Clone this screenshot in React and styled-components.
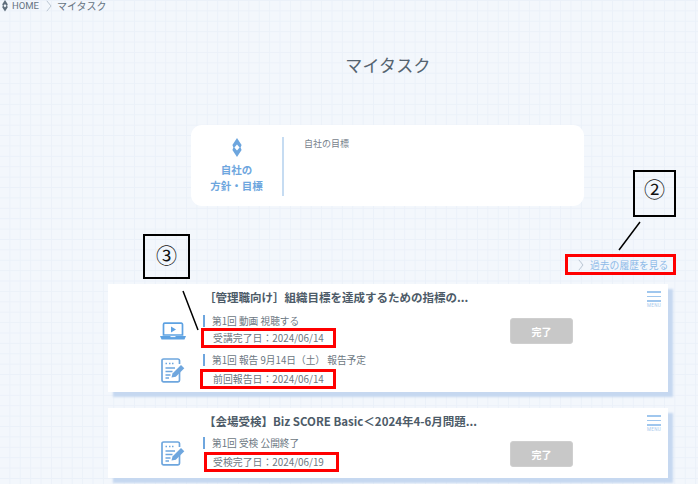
import styled, { createGlobalStyle } from 'styled-components'

const GlobalStyle = createGlobalStyle`
  html, body {
    margin: 0;
    padding: 0;
  }
  body {
    width: 698px;
    height: 484px;
    overflow: hidden;
    font-family: "Noto Sans CJK JP", "Noto Sans", sans-serif;
  }
`

const Page = styled.div`
  position: relative;
  width: 698px;
  height: 484px;
  overflow: hidden;
  background-color: #f3f7fc;
  background-image:
    linear-gradient(to right, #ebf1f9 1px, transparent 1px),
    linear-gradient(to bottom, #ebf1f9 1px, transparent 1px);
  background-size: 10.4px 10.4px;
  background-position: -1px 0;
`

const Breadcrumb = styled.nav`
  display: flex;
  align-items: center;
  height: 12px;
  padding-left: 2px;
  font-size: 10px;
  line-height: 12px;
  color: #667482;
`

const Crumb = styled.span`
  margin-left: ${(p) => p.$gap || 0}px;
  font-family: ${(p) => (p.$latin ? '"Roboto", sans-serif' : 'inherit')};
  font-size: ${(p) => (p.$latin ? '9.5px' : 'inherit')};
`

const Main = styled.main`
  width: 560px;
  margin-left: 108px;
`

const Title = styled.h1`
  margin: 41px 0 0;
  height: 24px;
  text-align: center;
  font-size: 17px;
  line-height: 24px;
  font-weight: 400;
  letter-spacing: 0.2px;
  color: #55636f;
`

const GoalPanel = styled.section`
  display: flex;
  width: 393px;
  height: 81px;
  margin: 48px 0 0 83px;
  padding: 12px 0;
  box-sizing: border-box;
  background: #fff;
  border-radius: 11px;
`

const GoalHead = styled.div`
  display: flex;
  flex-direction: column;
  align-items: center;
  width: 91px;
  height: 58px;
  padding-top: 1px;
  border-right: 2px solid #c6dcf2;
  color: #6ea6de;
  font-size: 10.5px;
  font-weight: 700;
  line-height: 16px;
  text-align: center;
`

const GoalHeadText = styled.div`
  margin-top: 5px;
`

const GoalText = styled.p`
  margin: 0 0 0 20px;
  font-size: 9px;
  line-height: 13px;
  color: #77828c;
`

const HistoryRow = styled.div`
  display: flex;
  justify-content: flex-end;
  margin: 48px -8px 0 0;
`

const HistoryLink = styled.a`
  display: flex;
  align-items: center;
  gap: 6px;
  width: 111px;
  height: 21px;
  box-sizing: border-box;
  padding-left: 10px;
  border: 3px solid #ff0000;
  font-size: 9.8px;
  color: #8fbbe8;
  white-space: nowrap;
`

const Chevron = styled.svg`
  flex: none;
  display: block;
`

const Card = styled.article`
  position: relative;
  display: flex;
  flex-direction: column;
  height: ${(p) => p.$height}px;
  margin-top: ${(p) => p.$top}px;
  background: #fff;
  box-shadow: 5px 5px 2px #c6d8f0;
`

const CardTitle = styled.h2`
  margin: 0;
  padding: 5px 0 0 96px;
  font-size: 11.5px;
  line-height: 17px;
  font-weight: 700;
  color: #4d5b68;
  white-space: nowrap;
`

const CardBody = styled.div`
  display: flex;
  justify-content: space-between;
  align-items: flex-start;
  margin-top: ${(p) => p.$top}px;
  padding-left: 52px;
`

const Lessons = styled.div`
  display: flex;
  flex-direction: column;
`

const Lesson = styled.div`
  display: flex;
  align-items: flex-start;
  height: ${(p) => p.$height || 'auto'};
`

const IconSlot = styled.div`
  flex: none;
  display: flex;
  justify-content: center;
  width: 26px;
  margin-top: ${(p) => p.$top}px;
`

const LessonText = styled.div`
  display: flex;
  flex-direction: column;
  align-items: flex-start;
  margin-left: 15px;
`

const LessonLabel = styled.div`
  height: 12px;
  padding-left: 7px;
  border-left: 2px solid #6ea6de;
  margin: 1px 0 0 2px;
  font-size: 9.7px;
  line-height: 12px;
  color: #6c7782;
  white-space: nowrap;
`

const DateBox = styled.div`
  width: ${(p) => p.$width || 135}px;
  height: 20px;
  box-sizing: border-box;
  margin: ${(p) => p.$top}px 0 0 ${(p) => p.$left || 0}px;
  padding-left: ${(p) => p.$pad}px;
  border: 3px solid #ff0000;
  font-size: 9.9px;
  line-height: 14px;
  color: #6c7782;
  white-space: nowrap;
`

const DoneButton = styled.button`
  flex: none;
  width: 63px;
  height: 26px;
  margin: ${(p) => p.$top}px 95px 0 0;
  padding: 0;
  border: 1px solid #cfcfcf;
  border-radius: 3px;
  background: #c8c8c8;
  color: #fff;
  font-family: inherit;
  font-size: 10px;
  font-weight: 700;
`

const MenuButton = styled.div`
  position: absolute;
  top: 7px;
  right: 7px;
  display: flex;
  flex-direction: column;
  align-items: center;
  width: 14px;
`

const MenuLine = styled.span`
  display: block;
  width: 14px;
  height: 1.5px;
  margin-bottom: 3px;
  background: #a0c7ee;
`

const MenuLabel = styled.span`
  margin-top: -2px;
  color: #a6c8ec;
  font-family: "Roboto", sans-serif;
  font-size: 4.5px;
  line-height: 5px;
  letter-spacing: 0.3px;
`

const Callout = styled.div`
  position: absolute;
  left: ${(p) => p.$x}px;
  top: ${(p) => p.$y}px;
  width: ${(p) => p.$w}px;
  height: ${(p) => p.$h}px;
  box-sizing: border-box;
  padding-top: ${(p) => p.$pad}px;
  border: 2px solid #000;
  font-size: 21px;
  line-height: 26px;
  text-align: center;
  color: #111;
`

const Leaders = styled.svg`
  position: absolute;
  left: 0;
  top: 0;
  pointer-events: none;
`

const CompassIcon = ({ size = 10, color = '#6ea6de' }) => (
  <svg width={size} height={size * 1.9} viewBox='0 0 10 19' style={{ display: 'block' }}>
    <path
      d='M5 0 9.6 7 8.6 9.5 9.6 12 5 19 .4 12 1.4 9.5 .4 7ZM5 6.6 2.4 9.5 5 12.4 7.6 9.5Z'
      fill={color}
      fillRule='evenodd'
    />
  </svg>
)

const LaptopIcon = () => (
  <svg width='26' height='18' viewBox='0 0 26 18' style={{ display: 'block' }}>
    <path d='M3.5 2.4A1.2 1.2 0 0 1 4.7 1.2H21.3A1.2 1.2 0 0 1 22.5 2.4V13H3.5Z' fill='#fff' stroke='#5ea2e2' strokeWidth='1.7' />
    <path d='M11 4.5 16 7.5 11 10.5Z' fill='#5ea2e2' />
    <path d='M0 14H26L24.5 17.5H1.5Z' fill='#5ea2e2' />
    <path d='M10.5 14.6H15.5' stroke='#fff' strokeWidth='1' />
  </svg>
)

const ReportIcon = () => (
  <svg width='24' height='25' viewBox='0 0 24 25' style={{ display: 'block' }}>
    <path
      d='M18.5 14V22.2A1.6 1.6 0 0 1 17 23.8H2.6A1.6 1.6 0 0 1 1 22.2V2.6A1.6 1.6 0 0 1 2.6 1H17A1.6 1.6 0 0 1 18.5 2.6V6'
      fill='none'
      stroke='#6ea6de'
      strokeWidth='1.7'
    />
    <path
      d='M4.5 5.5H6M8 5.5H9.5M11 5.5H12.5M4.5 10H14M4.5 13.5H11.5M4.5 17H9.5M4.5 20H8'
      stroke='#6ea6de'
      strokeWidth='1.4'
      fill='none'
    />
    <path d='M10.5 19.5 11.5 15.5 20 7 23.3 10.3 14.8 18.7Z' fill='#6ea6de' />
  </svg>
)

const RightChevron = () => (
  <Chevron width='6' height='12' viewBox='0 0 6 12'>
    <path d='M.8.8 5 6 .8 11.2' fill='none' stroke='#b5c2ce' strokeWidth='.9' />
  </Chevron>
)

const Menu = () => (
  <MenuButton>
    <MenuLine />
    <MenuLine />
    <MenuLine />
    <MenuLabel>MENU</MenuLabel>
  </MenuButton>
)

const App = () => (
  <Page>
    <GlobalStyle />
    <Breadcrumb>
      <CompassIcon size={6} color='#5f6e7c' />
      <Crumb $latin $gap={4}>HOME</Crumb>
      <Crumb $gap={7}><RightChevron /></Crumb>
      <Crumb $gap={5}>マイタスク</Crumb>
    </Breadcrumb>
    <Main>
      <Title>マイタスク</Title>
      <GoalPanel>
        <GoalHead>
          <CompassIcon />
          <GoalHeadText>
            自社の
            <br />
            方針・目標
          </GoalHeadText>
        </GoalHead>
        <GoalText>自社の目標</GoalText>
      </GoalPanel>
      <HistoryRow>
        <HistoryLink>
          <RightChevron />
          過去の履歴を見る
        </HistoryLink>
      </HistoryRow>
      <Card $top={9} $height={108}>
        <CardTitle>［管理職向け］組織目標を達成するための指標の...</CardTitle>
        <Menu />
        <CardBody $top={8}>
          <Lessons>
            <Lesson $height='39px'>
              <IconSlot $top={8}><LaptopIcon /></IconSlot>
              <LessonText>
                <LessonLabel>第1回 動画 視聴する</LessonLabel>
                <DateBox $top={1} $pad={9}>受講完了日：2024/06/14</DateBox>
              </LessonText>
            </Lesson>
            <Lesson>
              <IconSlot $top={5}><ReportIcon /></IconSlot>
              <LessonText>
                <LessonLabel>第1回 報告 9月14日（土） 報告予定</LessonLabel>
                <DateBox $top={3} $left={-1} $pad={10} $width={136}>前回報告日：2024/06/14</DateBox>
              </LessonText>
            </Lesson>
          </Lessons>
          <DoneButton $top={4}>完了</DoneButton>
        </CardBody>
      </Card>
      <Card $top={16} $height={70}>
        <CardTitle>【会場受検】Biz SCORE Basic＜2024年4-6月問題...</CardTitle>
        <Menu />
        <CardBody $top={6}>
          <Lessons>
            <Lesson>
              <IconSlot $top={5}><ReportIcon /></IconSlot>
              <LessonText>
                <LessonLabel>第1回 受検 公開終了</LessonLabel>
                <DateBox $top={3} $left={3} $pad={6}>受検完了日：2024/06/19</DateBox>
              </LessonText>
            </Lesson>
          </Lessons>
          <DoneButton $top={5}>完了</DoneButton>
        </CardBody>
      </Card>
    </Main>
    <Callout $x={633} $y={170} $w={43} $h={47} $pad={3}>②</Callout>
    <Callout $x={143} $y={234} $w={47} $h={45} $pad={5}>③</Callout>
    <Leaders width='698' height='484' viewBox='0 0 698 484'>
      <path d='M640 222 619 250M183 291 198 330' stroke='#000' strokeWidth='1.5' fill='none' />
    </Leaders>
  </Page>
)

export default App
